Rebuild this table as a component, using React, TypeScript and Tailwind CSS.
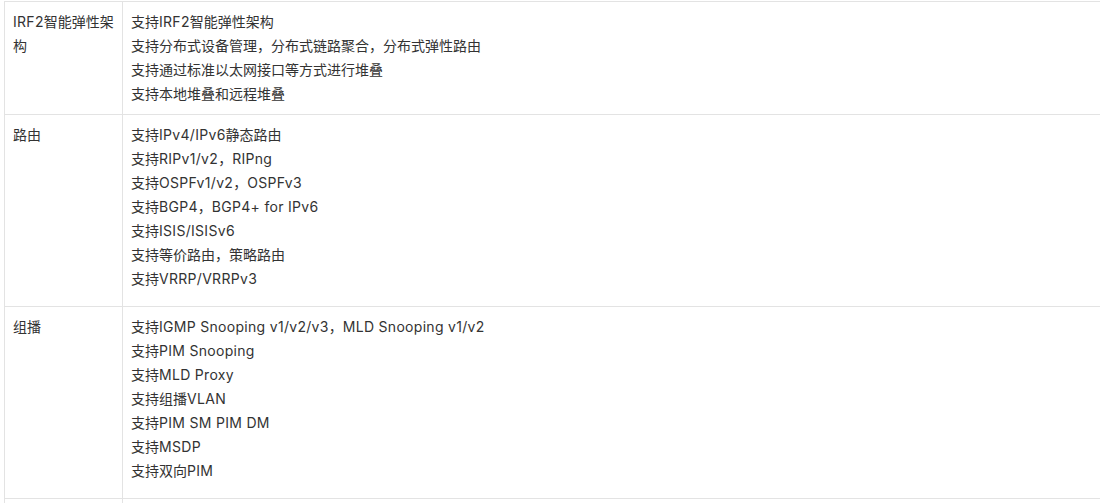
const rows: { name: string; items: string[]; h: string }[] = [
  {
    name: "IRF2智能弹性架构",
    items: [
      "支持IRF2智能弹性架构",
      "支持分布式设备管理，分布式链路聚合，分布式弹性路由",
      "支持通过标准以太网接口等方式进行堆叠",
      "支持本地堆叠和远程堆叠",
    ],
    h: "h-[113px]",
  },
  {
    name: "路由",
    items: [
      "支持IPv4/IPv6静态路由",
      "支持RIPv1/v2，RIPng",
      "支持OSPFv1/v2，OSPFv3",
      "支持BGP4，BGP4+ for IPv6",
      "支持ISIS/ISISv6",
      "支持等价路由，策略路由",
      "支持VRRP/VRRPv3",
    ],
    h: "h-[192px]",
  },
  {
    name: "组播",
    items: [
      "支持IGMP Snooping v1/v2/v3，MLD Snooping v1/v2",
      "支持PIM Snooping",
      "支持MLD Proxy",
      "支持组播VLAN",
      "支持PIM SM PIM DM",
      "支持MSDP",
      "支持双向PIM",
    ],
    h: "h-[192px]",
  },
];

// latin runs get a touch of extra spacing so they run as wide as the original
function Mixed({ text }: { text: string }) {
  const parts = text.split(/([\x20-\x7e]+)/).filter(Boolean);
  return (
    <>
      {parts.map((p, i) =>
        /^[\x20-\x7e]+$/.test(p) ? (
          <span key={i} className="tracking-[0.3px]">
            {p}
          </span>
        ) : (
          <span key={i}>{p}</span>
        ),
      )}
    </>
  );
}

export default function App() {
  return (
    <div className="h-[503px] w-[1100px] overflow-hidden bg-white pt-px pl-1 font-['Inter','Noto_Sans_CJK_SC',sans-serif] text-sm text-[#333]">
      <table className="w-[1200px] table-fixed border-collapse">
        <colgroup>
          <col className="w-[118px]" />
          <col />
        </colgroup>
        <tbody>
          {rows.map((row) => (
            <tr key={row.name} className={row.h}>
              <td className="border border-[#e3e3e3] px-2 pt-2 align-top leading-6">
                <Mixed text={row.name} />
              </td>
              <td className="border border-[#e3e3e3] px-2 pt-2 align-top leading-6">
                {row.items.map((item) => (
                  <div key={item}>
                    <Mixed text={item} />
                  </div>
                ))}
              </td>
            </tr>
          ))}
          <tr className="h-[40px]">
            <td className="border border-[#e3e3e3]" />
            <td className="border border-[#e3e3e3]" />
          </tr>
        </tbody>
      </table>
    </div>
  );
}
